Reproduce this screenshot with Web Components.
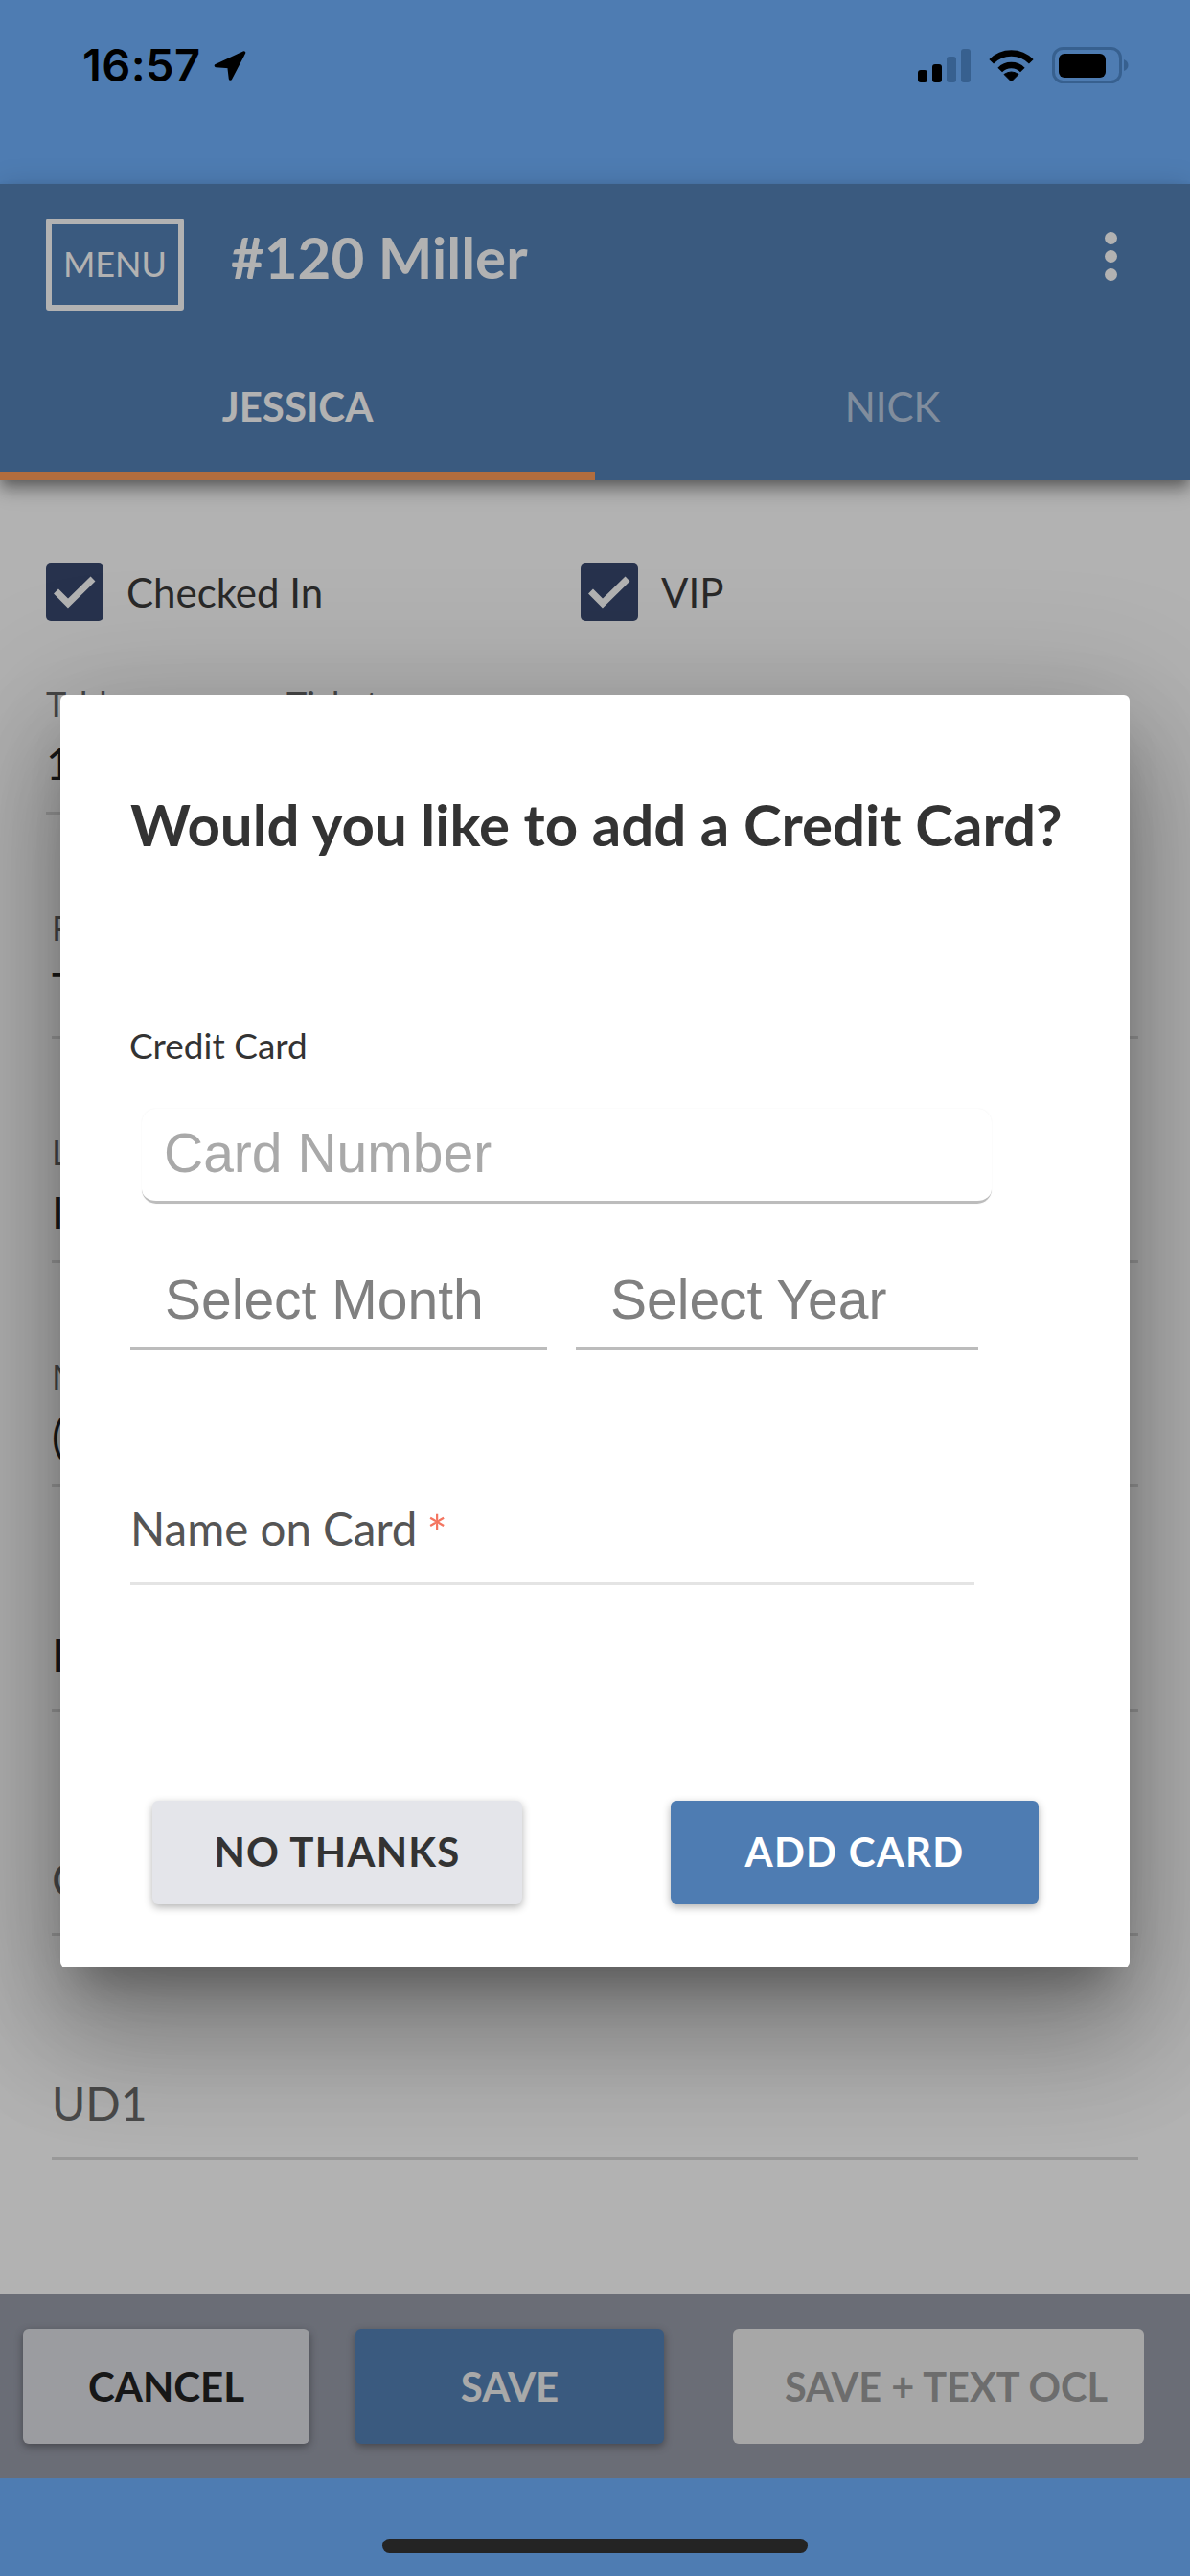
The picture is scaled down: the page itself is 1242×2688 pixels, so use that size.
<!DOCTYPE html>
<html lang="en">
<head>
<meta charset="utf-8">
<title>Add Credit Card</title>
<style>
  html, body { margin: 0; padding: 0; }
  body { width: 1242px; height: 2688px; overflow: hidden; font-family: Lato, "Liberation Sans", sans-serif; background: #fff; }
</style>
</head>
<body>
<app-shell>
  <status-bar slot="top"></status-bar>
  <app-header slot="top" title-text="#120 Miller"></app-header>

  <form-area>
    <check-row>
      <check-box label="Checked In"></check-box>
      <check-box label="VIP"></check-box>
    </check-row>
    <field-pair>
      <form-field short label="Table" value="1" style="width:220px"></form-field>
      <form-field short label="Ticket" style="width:300px"></form-field>
    </field-pair>
    <inset-rows>
      <form-field label="F" value="T"></form-field>
      <form-field label="L" value="I"></form-field>
      <form-field label="M" value="("></form-field>
      <form-field hint="I" dark></form-field>
      <form-field hint="C"></form-field>
      <form-field hint="UD1"></form-field>
    </inset-rows>
  </form-area>

  <action-bar>
    <action-button kind="plain" style="width:299px">CANCEL</action-button>
    <action-button kind="primary" style="width:322px;margin-left:48px">SAVE</action-button>
    <action-button kind="off" style="width:429px;margin-left:72px">SAVE + TEXT OCL</action-button>
  </action-bar>
  <home-bar></home-bar>

  <modal-overlay slot="over">
    <card-dialog>
      <span slot="title">Would you like to add a Credit Card?</span>
    </card-dialog>
  </modal-overlay>
</app-shell>

<script>
function make(name, css, html, setup) {
  customElements.define(name, class extends HTMLElement {
    connectedCallback() {
      if (this.shadowRoot) return;
      const root = this.attachShadow({ mode: 'open' });
      const body = typeof html === 'function' ? html(this) : html;
      root.innerHTML = '<style>' + css + '</style>' + body;
      if (setup) setup(this, root);
    }
  });
}

make('app-shell', `
  :host { display: block; position: relative; width: 1242px; height: 2688px; }
  .col { display: flex; flex-direction: column; height: 100%; }
`, `<div class="col"><slot name="top"></slot><slot></slot></div><slot name="over"></slot>`);

make('status-bar', `
  :host { display: flex; height: 192px; box-sizing: border-box; background: #4e7cb2; align-items: flex-start; color: #000; flex: none; }
  .time { font: 600 47px/1 Inter, Roboto, "Liberation Sans", sans-serif; letter-spacing: .4px; margin: 44px 0 0 86px; width: 125px; white-space: nowrap; }
  .arrow { margin: 53px 0 0 12px; }
  .right { margin: 49px 0 0 auto; display: flex; align-items: flex-start; padding-right: 64px; }
  svg { display: block; flex: none; }
`, `
  <div class="time">16:57</div>
  <svg class="arrow" width="34" height="31" viewBox="0 0 34 31"><path d="M31.5 2 L2.5 15.5 L16 16.5 L17.5 29 Z" fill="#000" stroke="#000" stroke-width="3.5" stroke-linejoin="round"/></svg>
  <div class="right">
    <svg width="55" height="36" viewBox="0 0 55 36" style="margin-top:1px">
      <rect x="0" y="23" width="10" height="13" rx="3" fill="#000"/>
      <rect x="15" y="17" width="10" height="19" rx="3" fill="#000"/>
      <rect x="30" y="9" width="10" height="27" rx="3" fill="#37608f"/>
      <rect x="45" y="1" width="10" height="35" rx="3" fill="#37608f"/>
    </svg>
    <svg width="47" height="36" viewBox="0 0 47 36" style="margin-left:19px;margin-top:1px">
      <g fill="none" stroke="#000" stroke-width="6.5">
        <path d="M2.7 14.3 A 29 29 0 0 1 44.3 14.3"/>
        <path d="M11.7 23 A 16.5 16.5 0 0 1 35.3 23"/>
      </g>
      <path d="M23.5 35 L16 27.5 Q23.5 22.5 31 27.5 Z" fill="#000" stroke="#000" stroke-width="1" stroke-linejoin="round"/>
    </svg>
    <svg width="80" height="38" viewBox="0 0 80 38" style="margin-left:19px">
      <rect x="1.5" y="1.5" width="70" height="35" rx="10" fill="none" stroke="#37608f" stroke-width="3"/>
      <rect x="7" y="7" width="49" height="25" rx="6" fill="#000"/>
      <path d="M75 13 Q79.5 15 79.5 19 Q79.5 23 75 25 Z" fill="#37608f"/>
    </svg>
  </div>
`);

make('app-header', `
  :host { display: block; flex: none; background: #5381b6; box-shadow: 0 6px 12px -3px rgba(0,0,0,.3), 0 12px 15px 0 rgba(0,0,0,.2), 0 3px 30px 0 rgba(0,0,0,.15); position: relative; z-index: 1; color: #fff; }
  .bar { height: 159px; display: flex; align-items: flex-start; box-sizing: border-box; padding: 36px 0 0 48px; }
  .menu { width: 144px; height: 96px; box-sizing: border-box; border: 6px solid #fff; border-radius: 3px; font: 400 36px/82px Lato, sans-serif; text-align: center; }
  h1 { margin: 4px 0 0 49px; font: 700 60px/72px Lato, sans-serif; flex: 1; }
  .more { display: flex; flex-direction: column; gap: 6px; margin: 14px 76px 0 0; }
  .more i { width: 13px; height: 13px; border-radius: 50%; background: #fff; display: block; }
  .tabs { display: flex; height: 150px; }
  .tab { flex: 1; text-align: center; font: 700 42px/147px Lato, sans-serif; }
  .tab.on { box-shadow: inset 0 -9px 0 #ff9d5a; }
  .tab.off { font-weight: 400; color: rgba(255,255,255,.6); }
`, el => `
  <div class="bar">
    <div class="menu">MENU</div>
    <h1>${el.getAttribute('title-text')}</h1>
    <div class="more"><i></i><i></i><i></i></div>
  </div>
  <div class="tabs"><div class="tab on">JESSICA</div><div class="tab off">NICK</div></div>
`);

make('form-area', `
  :host { display: flex; flex-direction: column; flex: 1; min-height: 0; background: #fff; padding-top: 87px; box-sizing: border-box; }
`, `<slot></slot>`);

make('check-row', `
  :host { display: grid; grid-template-columns: 558px auto; padding-left: 48px; height: 60px; }
`, `<slot></slot>`);

make('check-box', `
  :host { display: flex; align-items: center; gap: 24px; }
  .b { width: 60px; height: 60px; border-radius: 5px; background: #38486f; flex: none; display: block; }
  span { font: 400 42px/60px Lato, sans-serif; color: #3c3c3c; }
`, el => `
  <svg class="b" viewBox="0 0 60 60"><path d="M10.5 29 L23 41.5 L49 16" fill="none" stroke="#fff" stroke-width="7"/></svg>
  <span>${el.getAttribute('label')}</span>
`);

make('field-pair', `
  :host { display: flex; gap: 31px; padding-left: 48px; }
`, `<slot></slot>`);

make('inset-rows', `
  :host { display: flex; flex-direction: column; padding: 0 54px; }
`, `<slot></slot>`);

make('form-field', `
  :host { display: flex; flex-direction: column; justify-content: flex-end; height: 234px; box-sizing: border-box; border-bottom: 3px solid #dcdcdc; padding-bottom: 22px; flex: none; }
  :host([short]) { height: 202px; }
  .l { font: 400 36px/44px Lato, sans-serif; color: #666; margin-bottom: 13px; height: 44px; white-space: nowrap; }
  .v { font: 400 46px/56px Lato, sans-serif; color: #252525; height: 56px; }
  .h { font: 400 48px/56px Lato, sans-serif; color: #6a6a6a; margin-bottom: 6px; }
  :host([dark]) .h { color: #252525; }
`, el => {
  if (el.hasAttribute('hint')) return `<div class="h">${el.getAttribute('hint')}</div>`;
  return `<div class="l">${el.getAttribute('label')}</div><div class="v">${el.getAttribute('value') || ''}</div>`;
});

make('action-bar', `
  :host { display: flex; flex: none; height: 192px; box-sizing: border-box; padding: 36px 0 0 24px; background: #989ca9; align-items: flex-start; }
`, `<slot></slot>`);

make('action-button', `
  :host { display: block; height: 120px; box-sizing: border-box; border-radius: 6px; font: 700 42px/120px Lato, sans-serif; text-align: center; flex: none; white-space: nowrap; }
  :host([kind=plain]) { background: #dfe0e6; color: #222; box-shadow: 0 3px 9px rgba(0,0,0,.35); }
  :host([kind=primary]) { background: #5381b6; box-shadow: 0 3px 9px rgba(0,0,0,.35); color: #f3f3f3; }
  :host([kind=off]) { background: #f0f0f0; color: #9c9c9c; padding-left: 16px; font-size: 41.5px; }
`, `<slot></slot>`);

make('home-bar', `
  :host { display: flex; flex: none; height: 102px; background: #4e7cb2; justify-content: center; padding-top: 63px; box-sizing: border-box; }
  i { display: block; width: 444px; height: 15px; border-radius: 8px; background: #242424; }
`, `<i></i>`);

make('modal-overlay', `
  :host { display: flex; position: absolute; left: 0; top: 192px; width: 1242px; height: 2394px; background: rgba(0,0,0,.3); z-index: 5; align-items: center; justify-content: center; }
`, `<slot></slot>`);

make('card-dialog', `
  :host { display: block; width: 1116px; height: 1328px; box-sizing: border-box; background: #fff; border-radius: 6px; padding: 99px 0 0 73px;
    box-shadow: 0 33px 45px -21px rgba(0,0,0,.3), 0 72px 114px 9px rgba(0,0,0,.2), 0 27px 138px 24px rgba(0,0,0,.17); color: #333; }
  .title { font: 700 60px/72px Lato, sans-serif; white-space: nowrap; }
  .cap { font: 400 37px/40px Lato, sans-serif; margin-top: 175px; margin-left: -1px; }
  .num { margin: 46px 0 0 12px; width: 887px; height: 99px; box-sizing: border-box; border-radius: 15px; border-bottom: 3px solid #bcbcbc; box-shadow: 0 0 2px rgba(0,0,0,.06); padding-left: 23px; font: 400 57px/92px "Liberation Sans", Arial, sans-serif; color: #a9a9a9; }
  .dates { display: flex; gap: 30px; margin: 55px 0 0 0; }
  .sel { box-sizing: border-box; border-bottom: 3px solid #bcbcbc; padding: 0 0 4px 36px; font: 400 57px/91px "Liberation Sans", Arial, sans-serif; color: #808080; white-space: nowrap; }
  .name { display: flex; margin: 157px 0 0 0; width: 881px; border-bottom: 3px solid #e4e4e4; padding: 0 0 27px 0; box-sizing: border-box; font: 400 47.5px/58px Lato, sans-serif; color: #555; }
  .name b { display: block; font-weight: 400; font-size: 50px; line-height: 66px; height: 58px; color: #f47560; margin-left: 10px; }
  .btns { display: flex; gap: 155px; margin: 225px 0 0 23px; }
  .btn { height: 108px; border-radius: 6px; font: 700 42px/106px Lato, sans-serif; letter-spacing: 1.2px; text-align: center; box-shadow: 0 3px 9px rgba(0,0,0,.3); }
  .no { width: 386px; background: #e4e5ea; color: #333; }
  .add { width: 384px; background: #4e7cb2; color: #fff; }
`, `
  <div class="title"><slot name="title"></slot></div>
  <div class="cap">Credit Card</div>
  <div class="num">Card Number</div>
  <div class="dates">
    <div class="sel" style="width:435px">Select Month</div>
    <div class="sel" style="width:420px">Select Year</div>
  </div>
  <div class="name"><span>Name on Card</span><b>*</b></div>
  <div class="btns">
    <div class="btn no">NO THANKS</div>
    <div class="btn add">ADD CARD</div>
  </div>
`);
</script>
</body>
</html>
